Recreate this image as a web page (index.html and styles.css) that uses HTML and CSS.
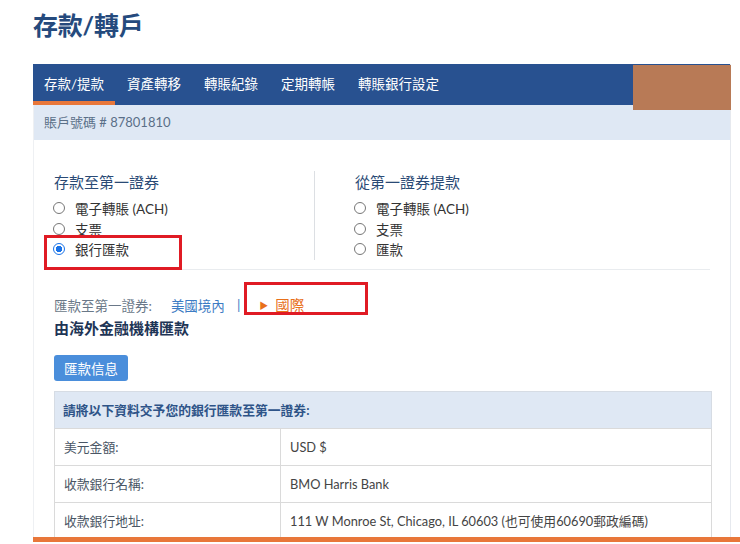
FILE: index.html
```html
<!DOCTYPE html>
<html lang="zh-Hant">
<head>
<meta charset="utf-8">
<title>存款/轉戶</title>
<link rel="stylesheet" href="styles.css">
</head>
<body>
<div class="page">
<h1 class="page-title">存款/轉戶</h1>

<div class="panel">
<div class="tabs">
  <a class="tab active" href="#">存款/提款</a>
  <a class="tab" href="#">資產轉移</a>
  <a class="tab" href="#">轉賬紀錄</a>
  <a class="tab" href="#">定期轉帳</a>
  <a class="tab" href="#">轉賬銀行設定</a>
  <div class="mask"></div>
</div>
<div class="account">賬戶號碼 # 87801810</div>

<div class="content">
  <div class="choose">
    <div class="col">
      <div class="col-title">存款至第一證券</div>
      <label class="opt"><span class="radio"></span>電子轉賬 (ACH)</label>
      <label class="opt"><span class="radio"></span>支票</label>
      <label class="opt"><span class="radio on"></span>銀行匯款</label>
      <div class="mark mark-bank"></div>
    </div>
    <div class="col col-right">
      <div class="col-title">從第一證券提款</div>
      <label class="opt"><span class="radio"></span>電子轉賬 (ACH)</label>
      <label class="opt"><span class="radio"></span>支票</label>
      <label class="opt"><span class="radio"></span>匯款</label>
    </div>
  </div>

  <div class="wire-to">
    <span class="wire-label">匯款至第一證券:</span>
    <a class="wire-link" href="#">美國境內</a>
    <span class="sep">|</span>
    <span class="wire-current"><span class="arrow">&#9654;</span>國際</span>
    <div class="mark mark-intl"></div>
  </div>
  <div class="sub-title">由海外金融機構匯款</div>
  <button class="btn">匯款信息</button>

  <table class="info">
    <tr><th colspan="2">請將以下資料交予您的銀行匯款至第一證券:</th></tr>
    <tr><td class="k">美元金額:</td><td>USD $</td></tr>
    <tr><td class="k">收款銀行名稱:</td><td>BMO Harris Bank</td></tr>
    <tr><td class="k">收款銀行地址:</td><td>111 W Monroe St, Chicago, IL 60603 (也可使用60690郵政編碼)</td></tr>
  </table>
</div>
</div>
</div>
<div class="bottom-bar"></div>
</body>
</html>
```

FILE: styles.css
```css
/* deposit / transfer page */

body
{ margin: 0;
background-color: #ffffff;
font-family: Lato, "Noto Sans CJK TC", sans-serif;
color: #333333;
overflow: hidden;
}

div.page
{ padding-left: 33px;
width: 698px;
height: 537px;
}

h1.page-title
{ margin: 0;
padding-top: 9px;
height: 64px;
box-sizing: border-box;
font-size: 25px;
line-height: 32px;
font-weight: bold;
color: #254a7d;
letter-spacing: -0.2px;
}

div.panel
{ border-right: 1px solid #e6e9ee;
border-left: 1px solid #eef0f3;
height: 473px;
}

div.tabs
{ position: relative;
display: flex;
height: 41px;
background-color: #285190;
margin-left: -1px;
}

a.tab
{ display: block;
padding: 0 11px 0 11px;
margin-right: 1px;
height: 41px;
line-height: 41px;
font-size: 13.5px;
color: #ffffff;
text-decoration: none;
box-sizing: border-box;
}

a.tab.active
{ border-bottom: 4px solid #e8773a;
}

div.mask
{ position: absolute;
right: -1px;
top: 1px;
width: 98px;
height: 45px;
background-color: #b87a56;
}

div.account
{ height: 35px;
line-height: 35px;
padding-left: 10px;
background-color: #dfe8f4;
font-size: 13px;
color: #5a6f88;
}

div.content
{ padding: 31px 20px 0 20px;
}

div.choose
{ display: flex;
border-bottom: 1px solid #e9ecef;
padding-bottom: 9px;
}

div.col
{ position: relative;
width: 260px;
display: flex;
flex-direction: column;
}

div.col-right
{ border-left: 1px solid #dcdfe3;
padding-left: 40px;
}

div.col-title
{ font-size: 15px;
line-height: 22px;
color: #2a4a75;
margin-bottom: 5px;
}

label.opt
{ display: flex;
align-items: center;
height: 20.5px;
font-size: 13.5px;
color: #333333;
}

span.radio
{ width: 12px;
height: 12px;
border: 1px solid #777777;
border-radius: 50%;
margin-right: 10px;
margin-left: -1px;
box-sizing: border-box;
}

span.radio.on
{ border: 1px solid #1a73e8;
background: radial-gradient(circle, #1a73e8 0, #1a73e8 3px, #ffffff 3.5px);
}

div.mark
{ position: absolute;
border: 3px solid #e01b24;
box-sizing: border-box;
}

div.mark-bank
{ left: -10px;
top: 64px;
width: 138px;
height: 35px;
}

div.wire-to
{ position: relative;
display: flex;
align-items: center;
margin-top: 25px;
height: 20px;
font-size: 13.5px;
}

span.wire-label
{ color: #6a7888;
margin-right: 19px;
}

a.wire-link
{ color: #3d7cc4;
text-decoration: none;
}

span.sep
{ color: #3d7cc4;
margin: 0 19px 0 12px;
}

span.wire-current
{ color: #e8701a;
font-size: 14.5px;
}

span.arrow
{ font-size: 9px;
margin-right: 7px;
vertical-align: 2px;
}

div.mark-intl
{ left: 190px;
top: -13px;
width: 124px;
height: 33px;
}

div.sub-title
{ margin-top: 1px;
font-size: 15px;
font-weight: bold;
line-height: 24px;
color: #1e3556;
}

button.btn
{ margin-top: 15px;
height: 26px;
padding: 0 10px;
border: none;
border-radius: 3px;
background-color: #4a8edb;
color: #ffffff;
font-family: inherit;
font-size: 13.5px;
}

table.info
{ margin-top: 10px;
width: 658px;
border-collapse: collapse;
font-size: 12.8px;
}

table.info th
{ text-align: left;
background-color: #dfe8f4;
color: #2e5488;
height: 36px;
padding: 0 8px;
border: 1px solid #d6dce4;
border-bottom: 1px dotted #b9c3cf;
font-weight: bold;
}

table.info td
{ height: 36px;
padding: 0 9px;
border: 1px solid #dadada;
color: #444444;
}

table.info td.k
{ width: 207px;
color: #4a5665;
}

div.bottom-bar
{ position: absolute;
left: 33px;
right: 0;
top: 537px;
height: 5px;
background-color: #e8773a;
}
```
